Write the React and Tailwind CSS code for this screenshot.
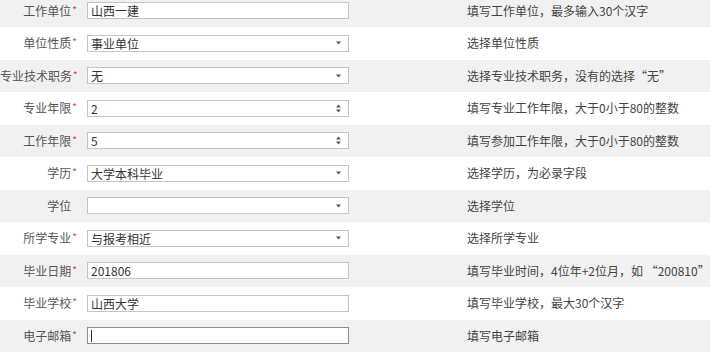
import React from 'react';

const rows = [
  { label: '工作单位', req: true, type: 'text', value: '山西一建', help: '填写工作单位，最多输入30个汉字' },
  { label: '单位性质', req: true, type: 'select', value: '事业单位', help: '选择单位性质' },
  { label: '专业技术职务', req: true, type: 'select', value: '无', help: '选择专业技术职务，没有的选择“无”' },
  { label: '专业年限', req: true, type: 'number', value: '2', help: '填写专业工作年限，大于0小于80的整数' },
  { label: '工作年限', req: true, type: 'number', value: '5', help: '填写参加工作年限，大于0小于80的整数' },
  { label: '学历', req: true, type: 'select', value: '大学本科毕业', help: '选择学历，为必录字段' },
  { label: '学位', req: false, type: 'select', value: '', help: '选择学位' },
  { label: '所学专业', req: true, type: 'select', value: '与报考相近', help: '选择所学专业' },
  { label: '毕业日期', req: true, type: 'text', value: '201806', help: '填写毕业时间，4位年+2位月，如 “200810”' },
  { label: '毕业学校', req: true, type: 'text', value: '山西大学', help: '填写毕业学校，最大30个汉字' },
  { label: '电子邮箱', req: true, type: 'email', value: '', help: '填写电子邮箱' },
];

const Field = ({ row }) => {
  const border = row.type === 'email' ? 'border-[#8c8c8c]' : 'border-[#c4c4c4]';
  return (
    <div className={`h-[17px] w-[262px] border ${border} bg-white flex items-center pl-[3px] pr-[6px] text-[12px] leading-[15px] text-[#333]`}>
      {row.type === 'email' && <span className="w-px h-[12px] bg-[#333]" />}
      <span className="flex-1 whitespace-nowrap">{row.value}</span>
      {row.type === 'select' && (
        <svg width="5" height="4" viewBox="0 0 5 4" className="mr-[1px]">
          <path d="M0 0.5h5L2.5 3.5z" fill="#555" />
        </svg>
      )}
      {row.type === 'number' && (
        <svg width="5" height="9" viewBox="0 0 5 9" className="mr-[1px]">
          <path d="M0 3.5h5L2.5 0.5z" fill="#555" />
          <path d="M0 5.5h5L2.5 8.5z" fill="#555" />
        </svg>
      )}
    </div>
  );
};

const App = () => {
  return (
    <div className="w-[710px] h-[352px] overflow-hidden bg-white font-['Microsoft_YaHei','Noto_Sans_CJK_SC',sans-serif]">
      <div className="-mt-[5.5px]">
        {rows.map((row, i) => (
          <div
            key={row.label}
            className={`h-[32.5px] flex items-center ${i % 2 === 0 ? 'bg-[#f1f1f1]' : 'bg-white'}`}
          >
            <div className="w-[78px] text-right text-[12px] text-[#555] whitespace-nowrap pr-[1px]">
              {row.label}
              <span className={`text-[#e4393c] text-[10px] relative -top-[2px] ml-px ${row.req ? '' : 'invisible'}`}>*</span>
            </div>
            <div className="ml-[9px]">
              <Field row={row} />
            </div>
            <div className="ml-[118px] text-[12px] text-[#444] whitespace-nowrap">{row.help}</div>
          </div>
        ))}
      </div>
    </div>
  );
};

export default App;
